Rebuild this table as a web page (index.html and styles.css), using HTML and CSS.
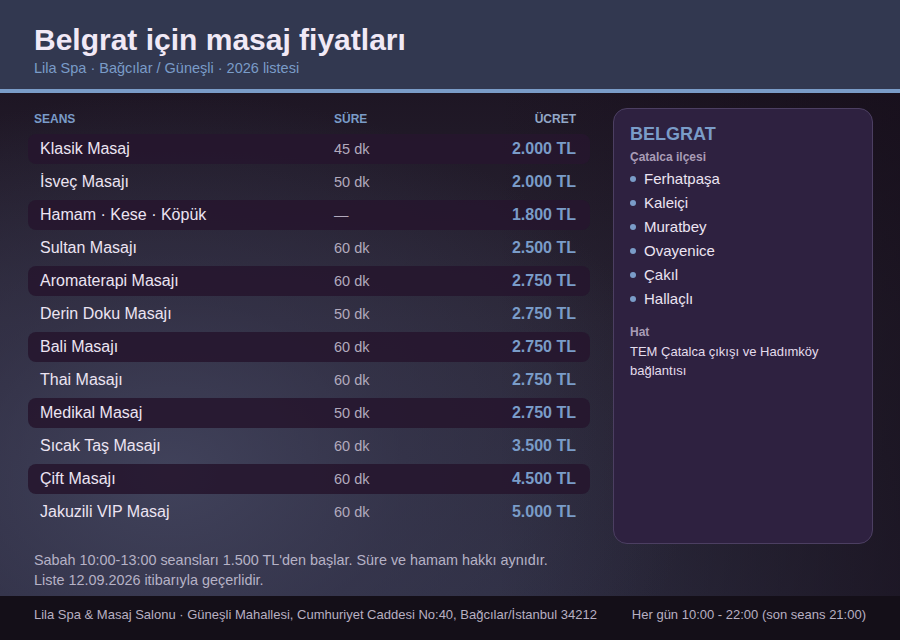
FILE: index.html
```html
<!DOCTYPE html>
<html lang="tr">
<head>
<meta charset="utf-8">
<title>Belgrat için masaj fiyatları</title>
<link rel="stylesheet" href="styles.css">
</head>
<body>
<div class="page">
  <header class="top">
    <h1 class="title">Belgrat için masaj fiyatları</h1>
    <p class="subtitle">Lila Spa · Bağcılar / Güneşli · 2026 listesi</p>
  </header>
  <main class="main">
    <section class="prices">
      <div class="thead">
        <span>SEANS</span><span>SÜRE</span><span class="th-price">ÜCRET</span>
      </div>
      <div class="row alt"><span class="name">Klasik Masaj</span><span class="dur">45 dk</span><span class="price">2.000 TL</span></div>
      <div class="row"><span class="name">İsveç Masajı</span><span class="dur">50 dk</span><span class="price">2.000 TL</span></div>
      <div class="row alt"><span class="name">Hamam · Kese · Köpük</span><span class="dur">—</span><span class="price">1.800 TL</span></div>
      <div class="row"><span class="name">Sultan Masajı</span><span class="dur">60 dk</span><span class="price">2.500 TL</span></div>
      <div class="row alt"><span class="name">Aromaterapi Masajı</span><span class="dur">60 dk</span><span class="price">2.750 TL</span></div>
      <div class="row"><span class="name">Derin Doku Masajı</span><span class="dur">50 dk</span><span class="price">2.750 TL</span></div>
      <div class="row alt"><span class="name">Bali Masajı</span><span class="dur">60 dk</span><span class="price">2.750 TL</span></div>
      <div class="row"><span class="name">Thai Masajı</span><span class="dur">60 dk</span><span class="price">2.750 TL</span></div>
      <div class="row alt"><span class="name">Medikal Masaj</span><span class="dur">50 dk</span><span class="price">2.750 TL</span></div>
      <div class="row"><span class="name">Sıcak Taş Masajı</span><span class="dur">60 dk</span><span class="price">3.500 TL</span></div>
      <div class="row alt"><span class="name">Çift Masajı</span><span class="dur">60 dk</span><span class="price">4.500 TL</span></div>
      <div class="row"><span class="name">Jakuzili VIP Masaj</span><span class="dur">60 dk</span><span class="price">5.000 TL</span></div>
    </section>
    <aside class="card">
      <h2 class="card-title">BELGRAT</h2>
      <p class="card-label">Çatalca ilçesi</p>
      <ul class="areas">
        <li>Ferhatpaşa</li>
        <li>Kaleiçi</li>
        <li>Muratbey</li>
        <li>Ovayenice</li>
        <li>Çakıl</li>
        <li>Hallaçlı</li>
      </ul>
      <p class="card-label hat">Hat</p>
      <p class="card-text">TEM Çatalca çıkışı ve Hadımköy bağlantısı</p>
    </aside>
    <div class="notes">
      <p>Sabah 10:00-13:00 seansları 1.500 TL'den başlar. Süre ve hamam hakkı aynıdır.</p>
      <p>Liste 12.09.2026 itibarıyla geçerlidir.</p>
    </div>
  </main>
  <footer class="foot">
    <span>Lila Spa &amp; Masaj Salonu · Güneşli Mahallesi, Cumhuriyet Caddesi No:40, Bağcılar/İstanbul 34212</span>
    <span>Her gün 10:00 - 22:00 (son seans 21:00)</span>
  </footer>
</div>
</body>
</html>
```

FILE: styles.css
```css
* { box-sizing: border-box; }
html, body { margin: 0; padding: 0; }
body {
  width: 900px;
  height: 640px;
  overflow: hidden;
  font-family: "Liberation Sans", Arial, sans-serif;
  background: #140f18;
}
.page {
  width: 900px;
  height: 640px;
  display: flex;
  flex-direction: column;
}
.top {
  height: 93px;
  padding: 22px 34px 0;
  background: #323850;
  border-bottom: 4px solid #7a9cc8;
}
.title {
  margin: 0;
  font-size: 30px;
  line-height: 36px;
  font-weight: 700;
  color: #f1e9f6;
}
.subtitle {
  margin: 1px 0 0;
  font-size: 14.5px;
  line-height: 18px;
  color: #7a9cc8;
}
.main {
  flex: 1;
  display: grid;
  grid-template-columns: 562px 260px;
  grid-template-rows: auto 1fr;
  column-gap: 23px;
  padding: 15px 0 0 28px;
  background:
    radial-gradient(ellipse 520px 380px at 170px 380px, rgba(68, 70, 96, 0.85) 0%, rgba(60, 60, 86, 0.5) 45%, rgba(40, 34, 54, 0) 100%),
    linear-gradient(90deg, rgba(0,0,0,0) 0%, rgba(0,0,0,0) 55%, rgba(22, 14, 26, 0.7) 100%),
    linear-gradient(180deg, #1e1624 0%, #2a2636 45%, #2e2e42 100%);
}
.prices {
  grid-column: 1;
  grid-row: 1;
  display: flex;
  flex-direction: column;
  gap: 3px;
  margin-top: 2px;
}
.thead {
  display: grid;
  grid-template-columns: 300px 1fr auto;
  height: 21px;
  padding: 0 14px 4px 6px;
  align-items: center;
  font-size: 12px;
  font-weight: 700;
  color: #7a9cc8;
}
.th-price { color: #93a8c8; }
.row {
  display: grid;
  grid-template-columns: 294px 1fr auto;
  align-items: center;
  height: 30px;
  padding: 0 14px 0 12px;
  border-radius: 8px;
}
.row.alt { background: rgba(38, 22, 46, 0.88); }
.name {
  font-size: 16px;
  color: #ece4f2;
}
.dur {
  font-size: 14.5px;
  color: #b2aabd;
}
.price {
  font-size: 16px;
  font-weight: 700;
  color: #7a9cc8;
}
.card {
  grid-column: 2;
  grid-row: 1 / span 2;
  align-self: start;
  height: 436px;
  padding: 14px 16px;
  border: 1px solid #4c3f62;
  border-radius: 14px;
  background: #2e2140;
}
.card-title {
  margin: 0;
  font-size: 18px;
  line-height: 22px;
  font-weight: 700;
  color: #7a9cc8;
}
.card-label {
  margin: 4px 0 0;
  font-size: 12px;
  line-height: 16px;
  font-weight: 700;
  color: #a99cb6;
}
.card-label.hat { margin-top: 14px; }
.areas {
  list-style: none;
  margin: 1px 0 0;
  padding: 0;
}
.areas li {
  display: flex;
  align-items: center;
  gap: 8px;
  height: 24px;
  font-size: 15px;
  color: #ece4f2;
}
.areas li::before {
  content: "";
  width: 6px;
  height: 6px;
  border-radius: 50%;
  background: #7a9cc8;
  margin-top: 2px;
}
.card-text {
  margin: 3px 0 0;
  font-size: 13px;
  line-height: 18.5px;
  color: #e4dcec;
}
.notes {
  grid-column: 1;
  grid-row: 2;
  padding: 23px 0 0 6px;
}
.notes p {
  margin: 0;
  font-size: 14.4px;
  line-height: 20px;
  color: #b6b2c6;
}
.foot {
  height: 44px;
  display: flex;
  justify-content: space-between;
  padding: 10px 34px 0;
  background: #140f18;
  font-size: 13px;
  line-height: 18px;
  color: #b8b0c2;
}
```
